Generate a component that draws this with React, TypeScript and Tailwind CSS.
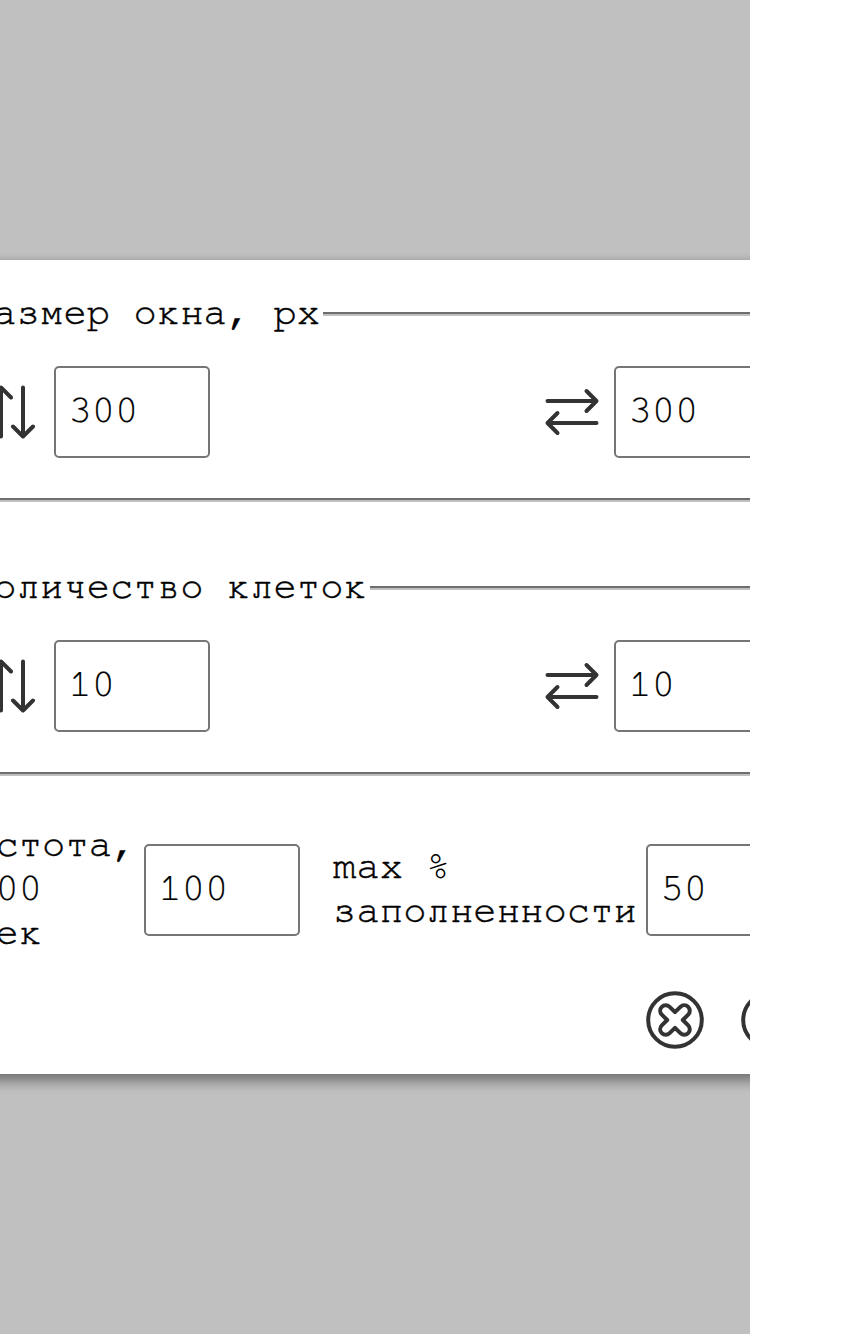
const SwapIcon = ({ vertical = false }: { vertical?: boolean }) => (
  <svg
    viewBox="0 0 64 64"
    className={vertical ? "size-16 shrink-0 rotate-90" : "size-16 shrink-0"}
    fill="none"
    stroke="#333"
    strokeWidth="4"
    strokeLinecap="round"
    strokeLinejoin="round"
  >
    <path d="M7.5 21H56.2M46.5 11L56.5 21L46.5 31M56.5 43H7.8M17.5 33L7.5 43L17.5 53" />
  </svg>
);

const CloseIcon = () => (
  <svg viewBox="-32 -32 64 64" className="size-16 shrink-0" fill="none" stroke="#333" strokeWidth="4" strokeLinejoin="round">
    <circle r="26.8" />
    <path d="M0 -7.8L5.4 -13.2A5.5 5.5 0 0 1 13.2 -5.4L7.8 0L13.2 5.4A5.5 5.5 0 0 1 5.4 13.2L0 7.8L-5.4 13.2A5.5 5.5 0 0 1 -13.2 5.4L-7.8 0L-13.2 -5.4A5.5 5.5 0 0 1 -5.4 -13.2Z" />
  </svg>
);

const ConfirmIcon = () => (
  <svg viewBox="-32 -32 64 64" className="size-16 shrink-0" fill="none" stroke="#333" strokeWidth="4" strokeLinejoin="round">
    <circle r="26.8" />
    <path d="M-12 0L-3 9L12 -8" />
  </svg>
);

const Field = ({ value }: { value: string }) => (
  <div className="flex h-[92px] w-[156px] shrink-0 items-center rounded-[5px] border-2 border-[#767676] bg-white pb-0.5 pl-[12.5px] [-webkit-text-stroke:0.2px_black]">
    {value}
  </div>
);

const Group = ({ title, value }: { title: string; value: string }) => (
  <section className="h-[214px]">
    <div className="flex h-11 items-center pl-[70px]">
      <div className="mr-[3px] pt-0.5 tracking-[0.07px] whitespace-nowrap">{title}</div>
      <div className="mt-1 h-1 grow border-y-2 border-t-[#6e6e6e] border-b-[#c0c0c0]" />
    </div>
    <div className="flex h-[166px] pt-8 pl-20">
      <div className="flex w-[560px] items-center gap-[10px] self-start">
        <SwapIcon vertical />
        <Field value={value} />
      </div>
      <div className="flex items-center gap-[10px] self-start">
        <SwapIcon />
        <Field value={value} />
      </div>
    </div>
    <div className="-mt-0.5 h-1 border-y-2 border-t-[#6e6e6e] border-b-[#c0c0c0]" />
  </section>
);

export default function App() {
  return (
    <div className="h-[1334px] w-[750px] overflow-hidden bg-[#c0c0c0] pt-[260px] font-['FreeMono','Courier_New','Liberation_Mono',monospace] text-[38.8px] leading-[44px] text-black">
      <main className="-ml-[100px] h-[814px] w-[950px] bg-white pt-[30px] shadow-[0_9px_10px_rgba(0,0,0,0.3),0_0_8px_rgba(0,0,0,0.2)]">
        <div className="flex flex-col gap-[60px] [-webkit-text-stroke:0.45px_black]">
          <Group title="Размер окна, px" value="300" />
          <Group title="Количество клеток" value="10" />
        </div>
        <div className="mt-[42px] flex h-[140px] items-center pl-[49px] [-webkit-text-stroke:0.45px_black]">
          <div className="w-[195px] shrink-0 pb-0.5">
            <span>Частота, </span>
            <span className="[-webkit-text-stroke:0.2px_black]">*100 </span>
            <span>мсек</span>
          </div>
          <Field value="100" />
          <div className="ml-[33px] w-[313px] shrink-0 pb-0.5 tracking-[0.1px]">
            max <span className="[-webkit-text-stroke:0]">%</span> заполненности
          </div>
          <Field value="50" />
        </div>
        <div className="mt-7 flex gap-[31px] pl-[743px]">
          <CloseIcon />
          <ConfirmIcon />
        </div>
      </main>
    </div>
  );
}
